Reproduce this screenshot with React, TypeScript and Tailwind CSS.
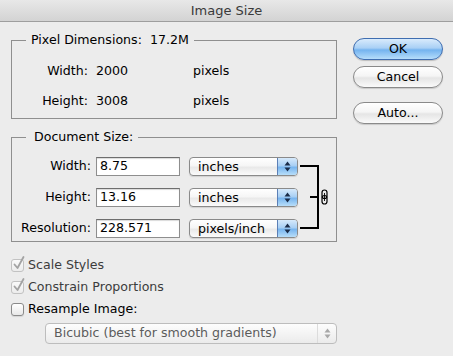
import React from 'react';

const UpDown = ({ color }: { color: string }) => (
  <svg width="7" height="11" viewBox="0 0 7 11">
    <polygon points="0.5,4.5 3.5,0.5 6.5,4.5" fill={color} />
    <polygon points="0.5,6.5 3.5,10.5 6.5,6.5" fill={color} />
  </svg>
);

const PopUp = ({ value }: { value: string }) => (
  <div className="flex h-[19px] w-[109px] rounded-[4px] border border-[#8a8a8a] bg-[linear-gradient(to_bottom,#ffffff_0%,#f6f6f6_45%,#e9e9e9_55%,#fbfbfb_100%)] shadow-[0_1px_1px_rgba(0,0,0,0.12)]">
    <div className="flex flex-1 items-center pl-[8px] leading-[17px]">{value}</div>
    <div className="flex w-[20px] items-center justify-center rounded-r-[3px] border-l border-[#5b7fb6] bg-[linear-gradient(to_bottom,#d6e9fb_0%,#a8cff4_45%,#78b5ef_55%,#b8def9_100%)]">
      <UpDown color="#1a2b48" />
    </div>
  </div>
);

const Field = ({ label, value, unit }: { label: string; value: string; unit: string }) => (
  <div className="flex h-[19px] items-center">
    <div className="w-[79px] text-right">{label}</div>
    <div className="ml-[5px] flex h-[19px] w-[84px] items-center border border-[#8e8e8e] border-t-[#6e6e6e] bg-white pl-[3px] shadow-[inset_0_1px_1px_rgba(0,0,0,0.15)]">
      {value}
    </div>
    <div className="ml-[9px]">
      <PopUp value={unit} />
    </div>
  </div>
);

const Check = ({ checked }: { checked: boolean }) => (
  <span
    className={
      checked
        ? 'relative block h-[13px] w-[13px] rounded-[3px] border border-[#c2c2c2] bg-[linear-gradient(to_bottom,#fafafa,#ececec)]'
        : 'relative block h-[13px] w-[13px] rounded-[3px] border border-[#8a8a8a] bg-[linear-gradient(to_bottom,#ffffff,#e8e8e8)] shadow-[0_1px_1px_rgba(0,0,0,0.1)]'
    }
  >
    {checked && (
      <svg className="absolute left-[1px] top-[-4px] overflow-visible" width="12" height="14" viewBox="0 0 12 14">
        <path d="M1.5 8.5 L4.5 12 L10.5 1" fill="none" stroke="#a3a3a3" strokeWidth="1.8" strokeLinecap="round" strokeLinejoin="round" />
      </svg>
    )}
  </span>
);

const AquaButton = ({ label, primary }: { label: string; primary?: boolean }) => (
  <button
    className={
      primary
        ? 'h-[22px] w-[90px] rounded-full border border-[#3f6db0] bg-[linear-gradient(to_bottom,#d9ebfc_0%,#a9d0f5_45%,#74b3ef_55%,#b6ddfb_100%)] leading-[20px] text-black shadow-[0_1px_1px_rgba(0,0,0,0.2)]'
        : 'h-[22px] w-[90px] rounded-full border border-[#8a8a8a] bg-[linear-gradient(to_bottom,#ffffff_0%,#f5f5f5_45%,#e5e5e5_55%,#fafafa_100%)] leading-[20px] text-black shadow-[0_1px_1px_rgba(0,0,0,0.15)]'
    }
  >
    {label}
  </button>
);

export default function App() {
  return (
    <div className="flex h-[356px] w-[453px] flex-col bg-[#ececec] font-['DejaVu_Sans',sans-serif] text-[12.6px] text-black">
      <div className="h-[22px] border-b border-[#9e9e9e] bg-[linear-gradient(to_bottom,#e8e8e8,#d3d3d3)] text-center text-[13px] leading-[21px] text-[#3a3a3a]">
        Image Size
      </div>

      <div className="flex pl-[11px] pt-[11px]">
        <div className="flex w-[326px] flex-col">
          <fieldset className="border border-[#8f8f8f] pb-[9px] pt-[16px]">
            <legend className="ml-[14px] px-[5px] leading-[14px]">
              Pixel Dimensions:<span className="ml-[8px]">17.2M</span>
            </legend>
            <div className="flex flex-col gap-[14px] leading-[16px]">
              <div className="flex">
                <div className="w-[76px] text-right">Width:</div>
                <div className="ml-[4px] w-[101px] pl-[4px]">2000</div>
                <div>pixels</div>
              </div>
              <div className="flex">
                <div className="w-[76px] text-right">Height:</div>
                <div className="ml-[4px] w-[101px] pl-[4px]">3008</div>
                <div>pixels</div>
              </div>
            </div>
          </fieldset>

          <fieldset className="mt-[11px] border border-[#8f8f8f] pb-[3px] pt-[13px]">
            <legend className="ml-[14px] pl-[8px] pr-[5px] leading-[14px]">Document Size:</legend>
            <div className="flex">
              <div className="flex flex-col gap-[12px]">
                <Field label="Width:" value="8.75" unit="inches" />
                <Field label="Height:" value="13.16" unit="inches" />
                <Field label="Resolution:" value="228.571" unit="pixels/inch" />
              </div>
              <svg width="32" height="81" viewBox="0 0 32 81">
                <path d="M2 9 H21 M20 8 V72 M2 71 H21 M12 40 H20" fill="none" stroke="#000" strokeWidth="2" />
                <rect x="24" y="33" width="5" height="8.5" rx="2.5" fill="none" stroke="#000" strokeWidth="1.2" />
                <rect x="24" y="38.5" width="5" height="8.5" rx="2.5" fill="none" stroke="#000" strokeWidth="1.2" />
                <path d="M26.5 36 V44" stroke="#000" strokeWidth="0.9" />
              </svg>
            </div>
          </fieldset>

          <div className="mt-[15px] flex flex-col gap-[6px] leading-[16px]">
            <label className="flex items-center gap-[4px] text-[#3c3c3c]">
              <Check checked />
              Scale Styles
            </label>
            <label className="flex items-center gap-[4px] text-[#3c3c3c]">
              <Check checked />
              Constrain Proportions
            </label>
            <label className="flex items-center gap-[4px]">
              <Check checked={false} />
              Resample Image:
            </label>
          </div>

          <div className="ml-[34px] mt-[6px] flex h-[21px] rounded-[4px] border border-[#bdbdbd] bg-[linear-gradient(to_bottom,#fdfdfd_0%,#f4f4f4_50%,#ebebeb_100%)] text-[#5c5c5c]">
            <div className="flex flex-1 items-center pl-[8px]">Bicubic (best for smooth gradients)</div>
            <div className="flex w-[19px] items-center justify-center border-l border-[#dcdcdc]">
              <UpDown color="#a8a8a8" />
            </div>
          </div>
        </div>

        <div className="ml-[16px] mt-[5px] flex flex-col">
          <AquaButton label="OK" primary />
          <div className="mt-[6px]">
            <AquaButton label="Cancel" />
          </div>
          <div className="mt-[14px]">
            <AquaButton label="Auto..." />
          </div>
        </div>
      </div>
    </div>
  );
}
